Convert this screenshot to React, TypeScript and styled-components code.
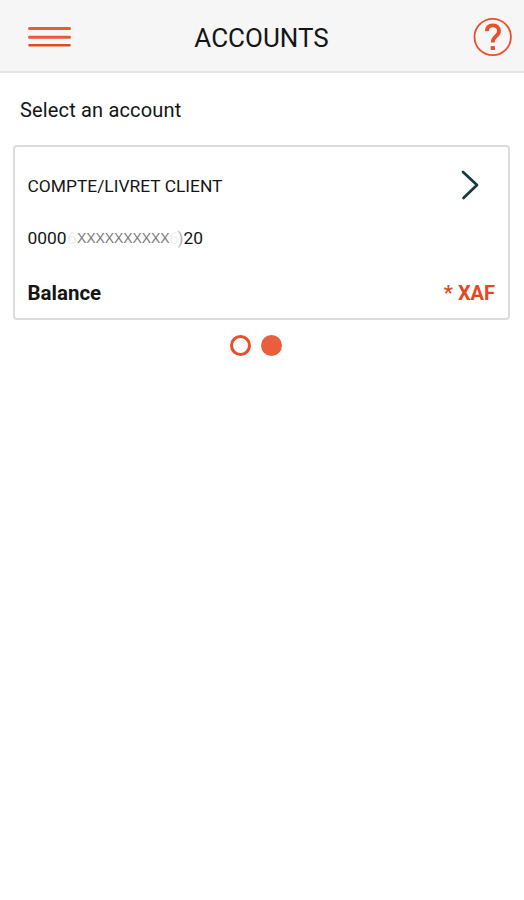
import React from "react";
import styled, { createGlobalStyle } from "styled-components";

const GlobalStyle = createGlobalStyle`
  * { box-sizing: border-box; }
  body { margin: 0; background: #fff; font-family: Roboto, "Liberation Sans", sans-serif; color: #151515; }
  svg { display: block; }
`;

const Screen = styled.div`
  min-height: 900px;
  background: #fff;
`;

const Header = styled.header`
  display: grid;
  grid-template-columns: 70px 1fr 70px;
  align-items: center;
  height: 73px;
  padding: 3px 11px 0 28px;
  background: #f6f6f6;
  border-bottom: 2px solid #e4e4e4;
`;

const Title = styled.h1`
  margin: 0 0 0 -18px;
  padding-top: 2px;
  text-align: center;
  font-size: 26px;
  line-height: 30px;
  font-weight: 400;
  white-space: nowrap;
`;

const IconButton = styled.button<{ $end?: boolean }>`
  display: flex;
  justify-self: ${(p) => (p.$end ? "end" : "start")};
  padding: 0;
  border: 0;
  background: none;
`;

const Prompt = styled.p`
  margin: 0;
  padding: 25px 20px 0;
  height: 72px;
  font-size: 20px;
  line-height: 24px;
  letter-spacing: 0.16px;
`;

const Card = styled.section`
  height: 175px;
  margin: 0 14px 0 12.5px;
  padding: 23px 13px 0 13px;
  border: 2px solid #dcdcdc;
  border-radius: 4px;
`;

const CardRow = styled.div<{ $height: number }>`
  display: flex;
  align-items: flex-start;
  justify-content: space-between;
  height: ${(p) => p.$height}px;
`;

const AccountName = styled.span`
  padding-top: 5px;
  font-size: 17.4px;
  line-height: 22px;
`;

const AccountNumber = styled.span`
  display: flex;
  font-size: 17.4px;
  line-height: 22px;
`;

const Digits = styled.span<{ $width: number; $tone?: string }>`
  width: ${(p) => p.$width}px;
  color: ${(p) => p.$tone ?? "inherit"};
`;

const Mask = styled.span`
  width: 92px;
  font-family: "Liberation Sans", Arial, sans-serif;
  font-size: 14px;
  letter-spacing: -0.1px;
  color: #7c7c7c;
`;

const Amount = styled.span<{ $accent?: boolean }>`
  font-size: ${(p) => (p.$accent ? 20 : 20.5)}px;
  line-height: 24px;
  font-weight: 700;
  color: ${(p) => (p.$accent ? "#e5481f" : "inherit")};
`;

const Chevron = styled.svg`
  margin-right: 16.5px;
`;

const Pager = styled.nav`
  display: flex;
  gap: 10px;
  padding: 15px 0 0 230px;
`;

const Dot = styled.span<{ $active?: boolean }>`
  width: 21px;
  height: 21px;
  border: 3px solid ${(p) => (p.$active ? "#e95f3d" : "#e8502c")};
  border-radius: 50%;
  background: ${(p) => (p.$active ? "#e95f3d" : "#fff")};
`;

export default function App() {
  return (
    <Screen>
      <GlobalStyle />
      <Header>
        <IconButton aria-label="Menu">
          <svg width="43" height="22" viewBox="0 0 43 22" stroke="#e85a38" strokeLinecap="round">
            <path d="M1.5 2.5H41.5M1.5 11.2H41.5" strokeWidth="3" />
            <path d="M1.5 19.3H41.5" strokeWidth="2.4" stroke="#df4a25" />
          </svg>
        </IconButton>
        <Title>ACCOUNTS</Title>
        <IconButton $end aria-label="Help">
          <svg width="40" height="40" viewBox="0 0 40 40" fill="none" stroke="#e8502c">
            <circle cx="19.7" cy="20" r="18.2" strokeWidth="1.8" />
            <path d="M13.9 14.3C13.9 10.3 16.4 8.4 19.9 8.4C23.6 8.4 26 10.5 26 14C26 19.6 19.8 18.8 19.8 25.4" strokeWidth="3.8" />
            <path d="M19.8 29.1V33" strokeWidth="4.2" />
          </svg>
        </IconButton>
      </Header>
      <main>
        <Prompt>Select an account</Prompt>
        <Card>
          <CardRow $height={57}>
            <AccountName>COMPTE/LIVRET CLIENT</AccountName>
            <Chevron width="18" height="30" viewBox="0 0 18 30" fill="none" stroke="#17393c" strokeWidth="2.7" strokeLinecap="round" strokeLinejoin="round">
              <path d="M2 2L16 15L2.5 28" />
            </Chevron>
          </CardRow>
          <CardRow $height={54}>
            <AccountNumber>
              <Digits $width={39.5}>0000</Digits>
              <Digits $width={10} $tone="#eeeeee">6</Digits>
              <Mask>XXXXXXXXXX</Mask>
              <Digits $width={8.5} $tone="#f2f2f2">6</Digits>
              <Digits $width={6} $tone="#b4b4b4">)</Digits>
              <Digits $width={20}>20</Digits>
            </AccountNumber>
          </CardRow>
          <CardRow $height={24}>
            <Amount>Balance</Amount>
            <Amount $accent>* XAF</Amount>
          </CardRow>
        </Card>
        <Pager aria-label="Account pages">
          <Dot />
          <Dot $active />
        </Pager>
      </main>
    </Screen>
  );
}
